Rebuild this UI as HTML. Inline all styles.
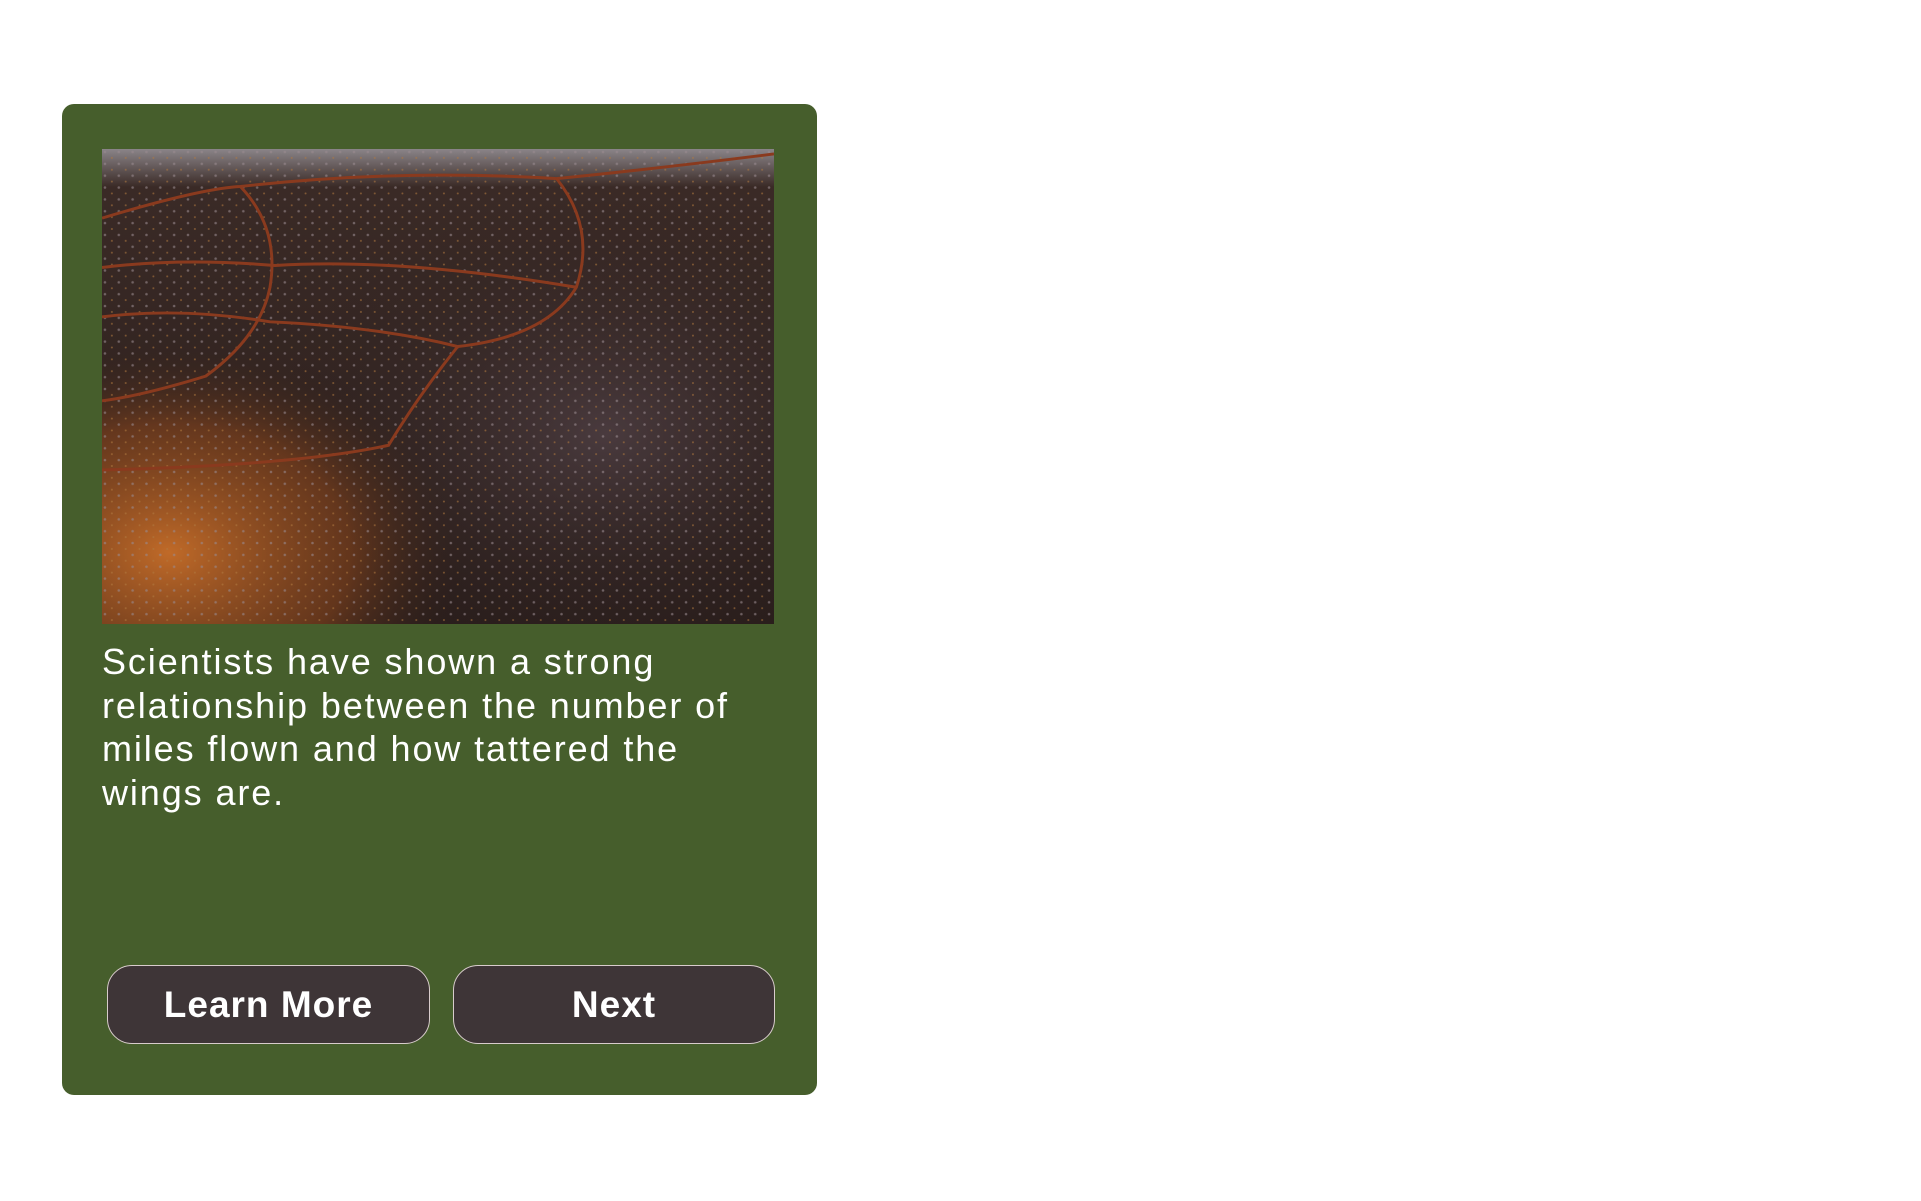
<!DOCTYPE html>
<html><head><style>
html,body{margin:0;padding:0;background:#fff;width:1921px;height:1201px;overflow:hidden;font-family:"Liberation Sans","DejaVu Sans",sans-serif}
.card{position:absolute;left:62px;top:104px;width:755px;height:991px;background:#465e2c;border-radius:12px}
.img{position:absolute;left:102px;top:149px;width:672px;height:475px;overflow:hidden;background:#2a1e1a}
.txt{position:absolute;left:102px;top:640px;width:660px;color:#fff;font-size:36px;line-height:43.5px;letter-spacing:1.9px}
.btn{position:absolute;top:965px;background:#3e3537;border:1.5px solid #d8cccc;border-radius:25px;color:#fff;font-weight:bold;font-size:37px;letter-spacing:1px;display:flex;align-items:center;justify-content:center;box-sizing:border-box;height:79px}
</style></head><body>
<div class="card"></div>
<div class="img">
<svg width="672" height="475" viewBox="0 0 680 481" preserveAspectRatio="none">
<defs>
<radialGradient id="o" cx="0.1" cy="0.85" r="0.45"><stop offset="0" stop-color="#c06a28"/><stop offset="0.6" stop-color="#7a3f1c" stop-opacity="0.7"/><stop offset="1" stop-color="#2a1e1a" stop-opacity="0"/></radialGradient>
<linearGradient id="t" x1="0" y1="0" x2="0" y2="1"><stop offset="0" stop-color="#8a8488"/><stop offset="0.08" stop-color="#3a2a26"/><stop offset="1" stop-color="#2a1e1c"/></linearGradient>
<radialGradient id="p" cx="0.75" cy="0.6" r="0.5"><stop offset="0" stop-color="#5a4a52" stop-opacity="0.6"/><stop offset="1" stop-color="#2a1e1c" stop-opacity="0"/></radialGradient>
<pattern id="d" width="14" height="12" patternUnits="userSpaceOnUse"><circle cx="3" cy="3" r="1.3" fill="#9a8a90" opacity="0.6"/><circle cx="10" cy="9" r="1" fill="#b07a40" opacity="0.6"/></pattern>
</defs>
<rect width="680" height="481" fill="url(#t)"/>
<rect width="680" height="481" fill="url(#p)"/>
<rect width="680" height="481" fill="url(#o)"/>
<rect width="680" height="481" fill="url(#d)"/>
<g fill="none" stroke="#8a3a1e" stroke-width="3">
<path d="M0 70 Q100 40 140 38 Q300 20 460 30 Q560 20 680 5"/>
<path d="M140 38 Q180 80 170 140 Q160 190 105 230 Q40 250 0 255"/>
<path d="M460 30 Q500 80 480 140 Q450 190 360 200 Q320 250 290 300 Q200 320 0 325"/>
<path d="M0 170 Q80 160 170 175 Q280 180 360 200"/>
<path d="M0 120 Q80 110 175 118 Q300 110 480 140"/>
</g>
</svg>
</div>
<div class="txt">Scientists have shown a strong relationship between the number of miles flown and how tattered the wings are.</div>
<div class="btn" style="left:107px;width:323px">Learn More</div>
<div class="btn" style="left:453px;width:322px">Next</div>
</body></html>
